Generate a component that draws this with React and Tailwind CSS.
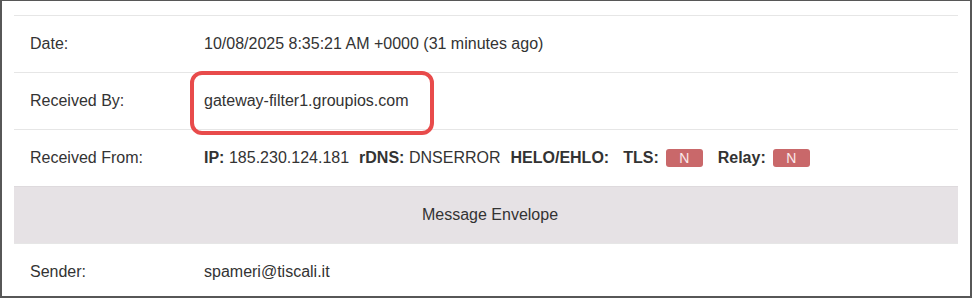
export default function App() {
  const font = { fontFamily: '"Liberation Sans", Arial, sans-serif' };
  const Row = ({ label, children }) => (
    <div className="flex border-t border-[#e6e6e6] h-[57px] items-center">
      <div className="w-[174px] pl-4 shrink-0">{label}</div>
      <div className="pl-4 flex items-center">{children}</div>
    </div>
  );
  const Badge = () => (
    <span className="inline-flex items-center justify-center w-[37px] h-[18px] rounded-[3px] bg-[#c9686a] text-[#fbeaea] text-[14px] leading-none">
      N
    </span>
  );
  return (
    <div
      className="relative w-[972px] h-[298px] overflow-hidden bg-white border-[#575757] border-t border-l-2 border-r-2 border-b-2 text-[16px] leading-6 text-[#333333]"
      style={font}
    >
      <div className="pt-[14px] pl-[12px] pr-[12px]">
        <Row label="Date:">10/08/2025 8:35:21 AM +0000 (31 minutes ago)</Row>
        <Row label="Received By:">gateway-filter1.groupios.com</Row>
        <Row label="Received From:">
          <b>IP:</b>
          <span className="ml-[4.5px]">185.230.124.181</span>
          <b className="ml-[10px]">rDNS:</b>
          <span className="ml-[4.5px]">DNSERROR</span>
          <b className="ml-[10px]">HELO/EHLO:</b>
          <b className="ml-[14px]">TLS:</b>
          <span className="ml-[7px] flex"><Badge /></span>
          <b className="ml-[15px]">Relay:</b>
          <span className="ml-[7px] flex"><Badge /></span>
        </Row>
        <div className="flex items-center justify-center h-[57px] bg-[#e6e2e5] border-t border-[#dedadd] pl-[8px]">
          Message Envelope
        </div>
        <Row label="Sender:">spameri@tiscali.it</Row>
      </div>
      <div className="absolute left-[188px] top-[70px] w-[244px] h-[64px] border-4 border-[#e84b4b] rounded-[12px]" />
    </div>
  );
}
